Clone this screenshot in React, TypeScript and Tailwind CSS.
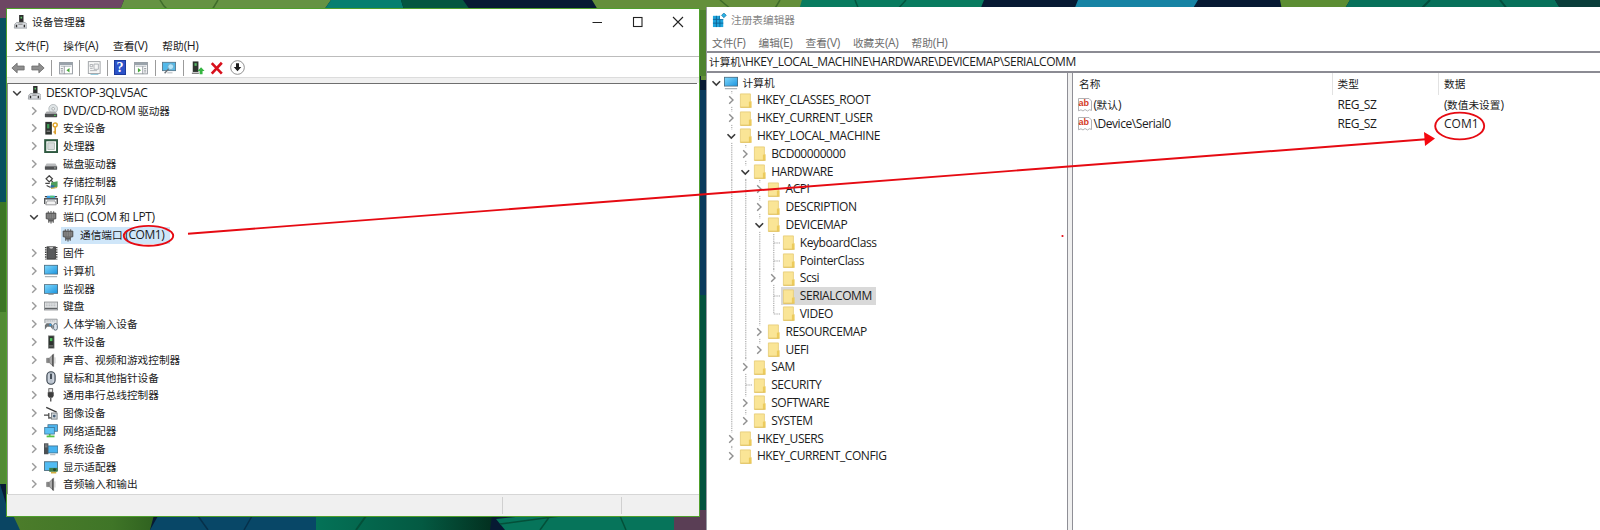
import React from "react";

/* ---------- text ---------- */

function Txt({ s, latin = "text-[12px] tracking-[-0.43px]" }: { s: string; latin?: string }) {
  const parts = s.split(/([\u3000-\u9fff]+)/).filter(Boolean);
  return (
    <span className="flex items-baseline whitespace-pre">
      {parts.map((p, i) =>
        /[\u3000-\u9fff]/.test(p) ? (
          <span key={i} className="font-['Noto_Sans_CJK_SC',sans-serif] text-[10.67px] leading-[16px]">
            {p}
          </span>
        ) : (
          <span key={i} className={"font-['Open_Sans','Noto_Sans_CJK_SC',sans-serif] leading-[16px] " + latin}>
            {p}
          </span>
        )
      )}
    </span>
  );
}

/* ---------- icons ---------- */

const Svg = ({ children, size = "size-[14px]" }: { children: React.ReactNode; size?: string }) => (
  <svg viewBox="0 0 16 16" className={"shrink-0 " + size}>
    {children}
  </svg>
);

const Monitor = ({ stand = true }: { stand?: boolean }) => (
  <Svg>
    <defs>
      <linearGradient id="scr" x1="0" y1="0" x2="1" y2="1">
        <stop offset="0" stopColor="#7fd6fb" />
        <stop offset="1" stopColor="#1e97e0" />
      </linearGradient>
    </defs>
    <rect x="0" y={stand ? 1 : 2.5} width="16" height="11" fill="#4d6b7d" />
    <rect x="0.9" y={stand ? 1.9 : 3.4} width="14.2" height="9.2" fill="url(#scr)" />
    {stand ? <path d="M1 14.5h14" stroke="#9aa4aa" strokeWidth="1.2" /> : <path d="M5 14.3h6" stroke="#8d979d" />}
  </Svg>
);

const Plug = () => (
  <Svg>
    <path d="M5 1.5v3M11 1.5v3M8 1v2" stroke="#777" strokeWidth="1.4" />
    <path d="M2.5 3.500h11V10h-2l-1 2.500h-5L4.500 10h-2z" fill="#6c6c6c" stroke="#4c4c4c" />
    <path d="M4.500 4.500v5M7 4.500v5M9.400 4.500v5M11.600 4.500v5" stroke="#a0a0a0" strokeWidth=".8" />
    <path d="M5.500 12.500v2M10.500 12.500v2M8 12.500v3" stroke="#444" strokeWidth="1.200" />
  </Svg>
);

const Speaker = () => (
  <Svg>
    <path d="M3 6h3v5H3z" fill="#8c8c8c" stroke="#666" strokeWidth=".6" />
    <path d="M6 6l5-5v14.5L6 11z" fill="#a9a9a9" stroke="#666" strokeWidth=".7" />
    <path d="M10 2v13" stroke="#555" strokeWidth="1.6" />
    <path d="M12.5 5v7" stroke="#bbb" />
  </Svg>
);

const icons: Record<string, () => React.ReactElement> = {
  root: () => (
    <Svg>
      <rect x="7" y="0" width="5" height="8.5" fill="#2d2d2d" />
      <rect x="8.6" y="2" width="1.8" height="2" fill="#5ecb6b" />
      <path d="M2 10.5l2-2h10l2 2v4.5H1.5z" fill="#d7dade" stroke="#8d9095" strokeWidth=".8" />
      <path d="M4 11v3M13 11v3" stroke="#2e2e2e" strokeWidth="1.6" />
      <path d="M6 10.5h5" stroke="#777" />
    </Svg>
  ),
  dvd: () => (
    <Svg>
      <circle cx="10.5" cy="5.5" r="5" fill="#dfe4e6" stroke="#a5abae" strokeWidth=".8" />
      <circle cx="10.5" cy="5.5" r="1.5" fill="#fff" stroke="#8d9497" strokeWidth=".8" />
      <path d="M3 8.5h10l2 2.5H1z" fill="#a7a9ab" />
      <rect x="1" y="11" width="14" height="4" rx=".5" fill="#4b4d4f" />
      <rect x="11.5" y="12.4" width="2" height="1.2" fill="#4fd15b" />
    </Svg>
  ),
  security: () => (
    <Svg>
      <rect x="1.5" y="1" width="7.5" height="14.5" fill="#2f3430" />
      <rect x="3.5" y="3.5" width="2.6" height="5" fill="#3e9c54" />
      <rect x="3" y="11" width="4" height="1.3" fill="#8c8c8c" />
      <circle cx="12.8" cy="4.5" r="2.3" fill="none" stroke="#e0a62c" strokeWidth="1.7" />
      <path d="M12.8 7v8M12.8 12.5h-2" stroke="#d89a22" strokeWidth="1.7" />
    </Svg>
  ),
  cpu: () => (
    <Svg>
      <rect x="1.4" y="1.4" width="13.6" height="13.6" fill="#fff" stroke="#2f5a41" strokeWidth="2.4" />
      <rect x="4.4" y="4.4" width="7.6" height="7.6" fill="#d8dcdc" stroke="#9fb0a6" strokeWidth=".8" />
    </Svg>
  ),
  disk: () => (
    <Svg>
      <path d="M3 7.5h10l2 3H1z" fill="#b9bbbd" />
      <rect x="1" y="10.5" width="14" height="4" rx=".5" fill="#4f5153" />
      <rect x="11.5" y="12" width="2" height="1" fill="#b5bdb7" />
    </Svg>
  ),
  storage: () => (
    <Svg>
      <path d="M6 .8l3.6 3.6L6 8 2.400 4.400z" fill="#fff" stroke="#444" strokeWidth="1.4" />
      <path d="M1.500 9.500h5M3 12l4 2M8 6l3 3" stroke="#444" strokeWidth="1.3" />
      <path d="M8 8.500l7.500-1.500v6.500L8 15z" fill="#4f9d5c" />
      <path d="M8 11.500l4 .5v3l-5-.5z" fill="#2c6ea5" />
      <path d="M8 15.300l7-1" stroke="#c9a94a" strokeWidth="1.2" />
    </Svg>
  ),
  printer: () => (
    <Svg>
      <path d="M3.500 3h9l1 4h-11z" fill="#3aa0e6" />
      <path d="M7 3h4l1 2H7z" fill="#58c46c" />
      <path d="M.8 12.500V6.500h14.400v6" fill="none" stroke="#56585a" strokeWidth="1.700" />
      <path d="M3.500 9h9l1.500 4.500H2z" fill="#f3f3f3" stroke="#77797b" strokeWidth=".8" />
      <path d="M1 4.200h2.500M12.500 4.200H15" stroke="#444" strokeWidth="1.300" />
    </Svg>
  ),
  plug: () => <Plug />,
  firmware: () => (
    <Svg>
      <rect x="3.500" y="1" width="9.500" height="14" fill="#58595b" stroke="#333" />
      <path d="M2 1v14.500M14.500 1v14.500" stroke="#444" strokeWidth="1.800" strokeDasharray="1.500 1.200" />
      <path d="M6 1.200a2.300 2 0 004.600 0" fill="#c7c7c7" />
    </Svg>
  ),
  computer: () => <Monitor />,
  monitor: () => <Monitor stand={false} />,
  keyboard: () => (
    <Svg>
      <rect x="0.500" y="3.500" width="15" height="9" fill="#e4e6e8" stroke="#888b8e" />
      <path d="M2 5.700h12M2 7.700h12" stroke="#aeb1b4" strokeWidth="1.100" strokeDasharray="1.300 .6" />
      <path d="M1 10.800h14" stroke="#5e6164" strokeWidth="1.600" />
    </Svg>
  ),
  hid: () => (
    <Svg>
      <path d="M1 7V2.500h14V8" fill="#dfe2e5" stroke="#8c9094" />
      <path d="M3 4.500h10" stroke="#9b9fa3" strokeDasharray="1.200 .8" />
      <path d="M1 14.500V9.500l2-2.500h5l2 2.500v5L7.500 11h-4z" fill="#6e7275" />
      <circle cx="7.300" cy="9" r="1.300" fill="#3d9ad8" />
      <rect x="11" y="7.500" width="4.200" height="7.500" rx="2" fill="#dce5ee" stroke="#4c5b69" />
    </Svg>
  ),
  software: () => (
    <Svg>
      <rect x="5" y="1" width="6.500" height="14" fill="#2e332f" stroke="#7d7f7e" strokeWidth=".8" />
      <rect x="6.800" y="3.500" width="2.800" height="3.500" fill="#4fc35d" />
      <path d="M6 12.500h4.500" stroke="#9a9a9a" />
    </Svg>
  ),
  speaker: () => <Speaker />,
  mouse: () => (
    <Svg>
      <rect x="3.300" y=".8" width="9.400" height="14.400" rx="4.600" fill="#b9c2cd" stroke="#3f4953" strokeWidth="1.300" />
      <path d="M8 3v6" stroke="#27303a" strokeWidth="1.800" />
      <path d="M5.600 3.500v9M10.500 3.500v9" stroke="#e5eaf0" strokeWidth=".8" />
    </Svg>
  ),
  usb: () => (
    <Svg>
      <rect x="5.500" y=".8" width="4.400" height="4" fill="#f0f0f0" stroke="#555" />
      <path d="M4.300 4.800h6.800V9l-1.500 2H5.800L4.300 9z" fill="#3d3d3d" />
      <path d="M7.700 11v4.500" stroke="#555" strokeWidth="1.600" />
    </Svg>
  ),
  camera: () => (
    <Svg>
      <path d="M2.500 1.500L14.500 7" stroke="#3c3c3c" strokeWidth="1.500" />
      <path d="M0 10.500h6M5.500 8v6.500M5.500 13.500h3" stroke="#4a4a4a" strokeWidth="1.400" />
      <rect x="8.500" y="8" width="6.500" height="7" fill="#cfd4d8" stroke="#6f757a" strokeWidth=".9" />
      <circle cx="11.700" cy="11.500" r="1.600" fill="#48617a" />
    </Svg>
  ),
  network: () => (
    <Svg>
      <rect x="4.500" y=".8" width="11" height="7.500" fill="#4db4ee" stroke="#46708a" strokeWidth=".9" />
      <rect x=".8" y="4" width="11" height="7.500" fill="#5cc1f5" stroke="#3a7396" strokeWidth=".9" />
      <path d="M6.500 11.500v2" stroke="#4aa83d" strokeWidth="2" />
      <path d="M3 14.200h9" stroke="#55c043" strokeWidth="2" />
    </Svg>
  ),
  system: () => (
    <Svg>
      <rect x="0" y="1.500" width="5" height="12.500" fill="#4c5053" />
      <path d="M1 3.500h3M1 5.500h3" stroke="#a3a7aa" strokeWidth=".9" />
      <rect x="4.800" y="4.500" width="11" height="8" fill="#46b3f0" stroke="#3a6c89" strokeWidth=".9" />
      <path d="M7 14.500h6" stroke="#9aa4aa" />
    </Svg>
  ),
  display: () => (
    <Svg>
      <rect x=".5" y="2" width="15" height="10" fill="#52bcf3" stroke="#4d6b7d" />
      <path d="M6 9h9.500v4.500H6z" fill="#3f7f49" />
      <circle cx="12" cy="11.200" r="1.700" fill="#27462c" />
      <path d="M8 14.500h6" stroke="#d3ae3e" strokeWidth="1.800" />
    </Svg>
  ),
};

const Chevron = ({ open }: { open: boolean }) => (
  <svg viewBox="0 0 10 10" className="size-[10px] shrink-0">
    {open ? (
      <path d="M1.200 3.200L5 7l3.800-3.800" fill="none" stroke="#3a3a3a" strokeWidth="1.500" />
    ) : (
      <path d="M3.200 1.200L7 5 3.200 8.800" fill="none" stroke="#9a9a9a" strokeWidth="1.400" />
    )}
  </svg>
);

const Folder = () => (
  <svg viewBox="0 0 14 15" className="h-[15px] w-[14px] shrink-0">
    <path d="M2.400.9h10v13.400h-10z" fill="#fae596" stroke="#e6cb73" strokeWidth=".8" />
    <path d="M10.900 8.800l2.700-.6v6.100h-2.700z" fill="#eccb5c" />
    <path d="M2.400 14.300h11.200" stroke="#dfbf58" strokeWidth=".8" />
  </svg>
);

const Ab = () => (
  <svg viewBox="0 0 14 14" className="size-[14px]">
    <path d="M.5.5h10.500l2.500 2.500v9.500l-2-.8-2 1.300-2.500-1.500-2 1.500-2-1.200-2.500 1z" fill="#fff" stroke="#a9a9ad" strokeWidth=".9" />
  </svg>
);

/* ---------- device manager ---------- */

type Dev = { t: string; icon: string; lvl: 0 | 1 | 2; open?: boolean };

const devices: Dev[] = [
  { t: "DESKTOP-3QLV5AC", icon: "root", lvl: 0, open: true },
  { t: "DVD/CD-ROM 驱动器", icon: "dvd", lvl: 1 },
  { t: "安全设备", icon: "security", lvl: 1 },
  { t: "处理器", icon: "cpu", lvl: 1 },
  { t: "磁盘驱动器", icon: "disk", lvl: 1 },
  { t: "存储控制器", icon: "storage", lvl: 1 },
  { t: "打印队列", icon: "printer", lvl: 1 },
  { t: "端口 (COM 和 LPT)", icon: "plug", lvl: 1, open: true },
  { t: "通信端口 (COM1)", icon: "plug", lvl: 2 },
  { t: "固件", icon: "firmware", lvl: 1 },
  { t: "计算机", icon: "computer", lvl: 1 },
  { t: "监视器", icon: "monitor", lvl: 1 },
  { t: "键盘", icon: "keyboard", lvl: 1 },
  { t: "人体学输入设备", icon: "hid", lvl: 1 },
  { t: "软件设备", icon: "software", lvl: 1 },
  { t: "声音、视频和游戏控制器", icon: "speaker", lvl: 1 },
  { t: "鼠标和其他指针设备", icon: "mouse", lvl: 1 },
  { t: "通用串行总线控制器", icon: "usb", lvl: 1 },
  { t: "图像设备", icon: "camera", lvl: 1 },
  { t: "网络适配器", icon: "network", lvl: 1 },
  { t: "系统设备", icon: "system", lvl: 1 },
  { t: "显示适配器", icon: "display", lvl: 1 },
  { t: "音频输入和输出", icon: "speaker", lvl: 1 },
];

const devPad = ["pl-[4px]", "pl-[21px]", "pl-[38px]"];

function DeviceRow({ d }: { d: Dev }) {
  const Icon = icons[d.icon];
  return (
    <div className={"flex h-[17.8px] items-center " + devPad[d.lvl]}>
      <div className="w-[15px] shrink-0">{d.lvl < 2 && <Chevron open={!!d.open} />}</div>
      <div className={"flex h-[17px] items-center gap-[5px] " + (d.lvl === 2 ? "bg-[#cfe6f9] pr-[6px]" : "")}>
        <Icon />
        <Txt s={d.t} />
      </div>
    </div>
  );
}

const Sep = () => <div className="h-[16px] w-px shrink-0 bg-[#9b9b9b]" />;

const PaneWindow = ({ flip }: { flip?: boolean }) => (
  <Svg>
    <rect x=".7" y="1.700" width="14.600" height="13" fill="#fff" stroke="#8a9097" />
    <rect x=".7" y="1.700" width="14.600" height="3" fill="#9aa3ab" />
    <path d="M2 6h12" stroke="#b9c0c6" strokeWidth="1.300" />
    {flip ? (
      <>
        <path d="M10 6v9" stroke="#8a9097" />
        <path d="M4.500 8v5l3.500-2.500z" fill="#49a83c" />
        <path d="M11.500 8.500h2.500M11.500 10.500h2.500M11.500 12.500h2.500" stroke="#8a9097" />
      </>
    ) : (
      <>
        <path d="M6 6v9" stroke="#8a9097" />
        <path d="M12 8v5L8.500 10.500z" fill="#49a83c" />
        <path d="M2 8.500h2.500M2 10.500h2.500M2 12.500h2.500" stroke="#8a9097" />
      </>
    )}
  </Svg>
);

function Toolbar() {
  const arrow = "M1 8l6-5.500v3.300h8v4.400H7v3.300z";
  return (
    <div className="flex h-[20px] shrink-0 items-center pt-[1px] pl-[4px]">
      <Svg>
        <path d={arrow} fill="#8f8f8f" stroke="#6f6f6f" />
      </Svg>
      <div className="ml-[6px] flex scale-x-[-1]">
        <Svg>
          <path d={arrow} fill="#8f8f8f" stroke="#6f6f6f" />
        </Svg>
      </div>
      <div className="ml-[6px] flex items-center gap-[6.500px]">
        <Sep />
        <PaneWindow />
        <Sep />
        <Svg>
          <rect x="1.500" y=".7" width="13.500" height="13.600" fill="#f6f6f6" stroke="#9a9ea2" />
          <path d="M3.500 4h3v2.500h-3zM3.500 8.500h3M3.500 11h8M8 3.500h5v6H8z" fill="none" stroke="#a9adb1" />
          <path d="M4 15.500h9" stroke="#7fc0d6" />
        </Svg>
        <Sep />
      </div>
      <div className="ml-[6px] flex h-[15px] w-[12px] items-center justify-center border border-[#1c3a9c] bg-[#2c52c8]">
        <span className="font-['Liberation_Serif',serif] text-[14px] leading-[14px] font-bold text-white">?</span>
      </div>
      <div className="ml-[8px] flex items-center gap-[6.500px]">
        <PaneWindow flip />
        <Sep />
        <Svg>
          <rect x=".5" y="1.500" width="15" height="9.500" fill="#52b9ea" stroke="#56788c" />
          <circle cx="10" cy="6.500" r="3.300" fill="#b5e6fb" stroke="#6ea9c5" />
          <path d="M7.500 9l-4.500 5" stroke="#6a7075" strokeWidth="1.600" />
          <path d="M6 13.500h6" stroke="#a8aeb2" />
        </Svg>
        <Sep />
      </div>
      <div className="ml-[7.500px] flex items-center">
        <Svg>
          <rect x="2" y=".5" width="6.500" height="12" fill="#2d332e" />
          <rect x="4" y="2.500" width="2.500" height="3" fill="#56b865" />
          <path d="M1 14h8" stroke="#777" strokeWidth="1.500" />
          <path d="M11.500 7l4 4.300h-2.300V15H9.800v-3.700H7.500z" fill="#35b541" />
        </Svg>
        <div className="ml-[5px] flex">
          <Svg>
            <path d="M2 2.500l11.500 12M13.500 2L2 14.500" stroke="#d8101c" strokeWidth="3" />
          </Svg>
        </div>
        <div className="ml-[6px] flex">
          <Svg size="size-[15px]">
            <circle cx="8" cy="8" r="7.300" fill="#fff" stroke="#8b8b8b" strokeWidth="1" />
            <path d="M6.400 3.500h3.200V7.500H12L8 12 4 7.500h2.400z" fill="#1d1d1d" />
          </Svg>
        </div>
      </div>
    </div>
  );
}

function DeviceManager() {
  return (
    <div className="mt-[8px] ml-[6px] flex h-[509px] w-[694px] shrink-0 flex-col border border-[#4f9f2c] bg-white text-[#1c1c1c]">
      <div className="flex h-[25px] shrink-0 items-center pl-[6px]">
        {icons.root()}
        <div className="ml-[5px]">
          <Txt s="设备管理器" />
        </div>
        <svg viewBox="0 0 100 14" className="mr-[10px] ml-auto h-[14px] w-[100px]" fill="none" stroke="#222" strokeWidth="1.100">
          <path d="M3.500 7.500h9.500M84 2l10 10M94 2L84 12" />
          <rect x="44.500" y="2.500" width="8.500" height="9" />
        </svg>
      </div>
      <div className="flex h-[22px] shrink-0 items-center gap-[15px] pt-px pl-[8px]">
        {["文件(F)", "操作(A)", "查看(V)", "帮助(H)"].map((m) => (
          <Txt key={m} s={m} />
        ))}
      </div>
      <div className="h-px shrink-0 bg-[#bcbcbc]" />
      <Toolbar />
      <div className="h-[6px] shrink-0 border-t border-[#dcdcdc] bg-[#f0f0f0]" />
      <div className="mr-[2px] flex h-[411px] shrink-0 flex-col border-t border-l border-t-[#6e6e6e] border-l-[#8e8e8e]">
        {devices.map((d) => (
          <DeviceRow key={d.t} d={d} />
        ))}
      </div>
      <div className="flex min-h-0 flex-1 border-t border-[#d6d6d6] bg-[#f0f0f0] py-[2px]">
        <div className="w-[496px] border-r border-[#d0d0d0]" />
        <div className="w-[119px] border-r border-[#d0d0d0]" />
      </div>
    </div>
  );
}

/* ---------- registry editor ---------- */

type Key = { t: string; lvl: number; state: "open" | "closed" | "leaf"; last?: boolean; sel?: boolean };

const keys: Key[] = [
  { t: "计算机", lvl: 0, state: "open" },
  { t: "HKEY_CLASSES_ROOT", lvl: 1, state: "closed" },
  { t: "HKEY_CURRENT_USER", lvl: 1, state: "closed" },
  { t: "HKEY_LOCAL_MACHINE", lvl: 1, state: "open" },
  { t: "BCD00000000", lvl: 2, state: "closed" },
  { t: "HARDWARE", lvl: 2, state: "open" },
  { t: "ACPI", lvl: 3, state: "closed" },
  { t: "DESCRIPTION", lvl: 3, state: "closed" },
  { t: "DEVICEMAP", lvl: 3, state: "open" },
  { t: "KeyboardClass", lvl: 4, state: "leaf" },
  { t: "PointerClass", lvl: 4, state: "leaf" },
  { t: "Scsi", lvl: 4, state: "closed" },
  { t: "SERIALCOMM", lvl: 4, state: "leaf", sel: true },
  { t: "VIDEO", lvl: 4, state: "leaf", last: true },
  { t: "RESOURCEMAP", lvl: 3, state: "closed" },
  { t: "UEFI", lvl: 3, state: "closed", last: true },
  { t: "SAM", lvl: 2, state: "closed" },
  { t: "SECURITY", lvl: 2, state: "leaf" },
  { t: "SOFTWARE", lvl: 2, state: "closed" },
  { t: "SYSTEM", lvl: 2, state: "closed", last: true },
  { t: "HKEY_USERS", lvl: 1, state: "closed" },
  { t: "HKEY_CURRENT_CONFIG", lvl: 1, state: "closed", last: true },
];

function KeyRow({ k }: { k: Key }) {
  const guides = Array.from({ length: k.lvl }, (_, i) => i);
  return (
    <div className="flex h-[17.8px] items-center pl-[2.300px]">
      {guides.map((g) => (
        <svg key={g} viewBox="0 0 14.3 17.8" className="h-[17.8px] w-[14.3px] shrink-0">
          {g > 0 && <path d="M7.800 0V17.800" stroke="#9c9c9c" strokeWidth="1" strokeDasharray="1 .78" />}
        </svg>
      ))}
      <svg viewBox="0 0 14.3 17.8" className="h-[17.8px] w-[14.3px] shrink-0" fill="none">
        {k.lvl > 0 && (
          <path d={k.last ? "M7.800 0V9" : "M7.800 0V17.800"} stroke="#9c9c9c" strokeDasharray="1 .78" />
        )}
        {k.state === "leaf" && <path d="M7.800 9H14" stroke="#9c9c9c" strokeDasharray="1 .78" />}
        {k.state !== "leaf" && <path d="M1 2.500h12v13H1z" fill="#fff" />}
        {k.state === "closed" && <path d="M5.200 5.200L9 9l-3.800 3.800" stroke="#8f8f8f" strokeWidth="1.400" />}
        {k.state === "open" && <path d="M3.500 7.200l3.800 3.800 3.800-3.800" stroke="#3a3a3a" strokeWidth="1.600" />}
      </svg>
      <div className={"flex h-[17.8px] items-center gap-[5px] pr-1 " + (k.sel ? "bg-[#d9d9d9]" : "")}>
        {k.lvl === 0 ? <Monitor /> : <Folder />}
        <Txt s={k.t} />
      </div>
    </div>
  );
}

const values = [
  { n: "(默认)", t: "REG_SZ", d: "(数值未设置)", tight: true },
  { n: "\\Device\\Serial0", t: "REG_SZ", d: "COM1", tight: false },
];

function RegistryEditor() {
  return (
    <div className="mt-[7px] ml-[6px] flex h-[523px] min-w-0 flex-1 flex-col border-l border-[#9a9aa4] bg-white text-[#1c1c1c]">
      <div className="flex h-[26px] shrink-0 items-center pl-[5px] text-[#858585]">
        <Svg size="size-[15px]">
          <path d="M1 3h11v12H1z" fill="#1fa4dc" />
          <path d="M1 6.800h11M1 10.800h11M4.700 3v12M8.400 3v12" stroke="#0c5f92" strokeWidth=".9" />
          <path d="M8.500 2.500h4v4h-4z" fill="#fff" />
          <path d="M12.600 0l2.600 2.400-2.400 2.600-2.600-2.400z" fill="#2bb3e6" stroke="#0c6c9f" strokeWidth=".7" />
        </Svg>
        <div className="ml-[4px]">
          <Txt s="注册表编辑器" />
        </div>
      </div>
      <div className="flex h-[18px] shrink-0 items-center gap-[13.200px] pt-px pl-[5px] text-[#6d6d6d]">
        {["文件(F)", "编辑(E)", "查看(V)", "收藏夹(A)", "帮助(H)"].map((m) => (
          <Txt key={m} s={m} />
        ))}
      </div>
      <div className="flex h-[22px] shrink-0 items-center border-y-2 border-[#8b8b93] pl-[2px]">
        <Txt s="计算机\HKEY_LOCAL_MACHINE\HARDWARE\DEVICEMAP\SERIALCOMM" />
      </div>
      <div className="flex min-h-0 flex-1">
        <div className="w-[360px] shrink-0 pt-[0.700px]">
          {keys.map((k) => (
            <KeyRow key={k.t} k={k} />
          ))}
        </div>
        <div className="w-[6px] shrink-0 border-x border-[#8f8f96] bg-[#f0f0f0]" />
        <div className="flex-1">
          <div className="mb-[0.800px] flex h-[22px] items-center">
            <div className="flex h-full w-[259.500px] items-center border-r border-[#e2e2e2] pl-[6px]">
              <Txt s="名称" />
            </div>
            <div className="flex h-full w-[106.500px] items-center border-r border-[#e2e2e2] pl-[5px]">
              <Txt s="类型" />
            </div>
            <div className="flex h-full items-center pl-[5px]">
              <Txt s="数据" />
            </div>
          </div>
          {values.map((v) => (
            <div key={v.n} className="flex h-[18.600px] items-center">
              <div className="flex w-[259.500px] items-center gap-[2px] pl-[4.500px]">
                <div className="relative size-[14px] shrink-0">
                  <Ab />
                  <span className="absolute top-0 left-[1px] font-['Liberation_Sans',sans-serif] text-[9px] leading-[11px] font-bold text-[#d43a26]">
                    ab
                  </span>
                </div>
                <Txt s={v.n} />
              </div>
              <div className="w-[106.500px] pl-[5px]">
                <Txt s={v.t} />
              </div>
              <div className="pl-[5px]">
                <Txt s={v.d} latin={v.tight ? undefined : "text-[12px]"} />
              </div>
            </div>
          ))}
        </div>
      </div>
    </div>
  );
}

/* ---------- desktop ---------- */

function Wallpaper() {
  return (
    <svg viewBox="0 0 1600 530" className="absolute inset-0 size-full">
      <defs>
        <linearGradient id="dusk">
          <stop offset="0" stopColor="#4d7d2b" />
          <stop offset=".7" stopColor="#3f7527" />
          <stop offset="1" stopColor="#2e601f" />
        </linearGradient>
        <linearGradient id="pine">
          <stop offset="0" stopColor="#047257" />
          <stop offset=".6" stopColor="#045a42" />
          <stop offset="1" stopColor="#02301f" />
        </linearGradient>
      </defs>
      <rect width="1600" height="530" fill="#071a33" />
      <path d="M0 0h124l-4 10H0z" fill="#6d4763" />
      <path d="M124 0h207l-7 10H120z" fill="#659343" />
      <path d="M160 0q3 6 8 10M218 0l-6 10" stroke="#3f6d2b" strokeWidth="1.500" fill="none" />
      <path d="M331 0h70l3 10h-80z" fill="#067f70" />
      <path d="M401 0h62l7 10h-66z" fill="#045640" />
      <path d="M592 0h210l-3 80h-98V10H598z" fill="#648f3b" />
      <path d="M720 0l12 10M780 0l-6 10" stroke="#3f6d2b" strokeWidth="1.500" />
      <path d="M802 0h182l-4 10H799z" fill="#087b5f" />
      <path d="M906 0l-9 10M855 0l4 10" stroke="#04553f" strokeWidth="1.500" />
      <path d="M1078 0h120l-6 10H1074z" fill="#1683a4" />
      <path d="M1280 0h70l-6 10h-62z" fill="#5c8d33" />
      <path d="M1350 0h205l6 10h-217z" fill="#07705a" />
      <path d="M1430 0l-10 10M1500 0l8 10" stroke="#044d3d" strokeWidth="2" />
      <path d="M1555 0h45v10h-39z" fill="#0a3d3a" />
      <path d="M0 0h6v18H0z" fill="#6d4763" />
      <path d="M0 18h6v184H0z" fill="#06505f" />
      <path d="M0 202h6v110H0z" fill="#3c7526" />
      <path d="M0 312h6v172H0z" fill="#528b35" />
      <path d="M0 484l14 46H0z" fill="#0a4563" />
      <path d="M0 516h20v14H0z" fill="#0a4563" />
      <path d="M6 500h152l-8 30H20z" fill="url(#dusk)" />
      <path d="M158 516h158v14H150z" fill="#084767" />
      <path d="M198 516l10 14M252 516l-8 14" stroke="#06304a" strokeWidth="1.500" />
      <path d="M316 516h176l-2 14H316z" fill="url(#pine)" />
      <path d="M366 516l-10 14" stroke="#045039" strokeWidth="2" />
      <path d="M496 519l30-3h150v14H505z" fill="#06745a" />
      <path d="M550 516l-10 14M620 516l6 14M500 524l60-8" stroke="#045039" strokeWidth="1.500" />
      <path d="M700 10h6v66h-6z" fill="#4e8230" />
      <path d="M700 90h6v205h-6z" fill="#0a3a5c" />
      <path d="M700 295h6v215h-6z" fill="#03523e" />
      <path d="M674 517h26v-7h6v20h-32z" fill="#5a3e55" />
    </svg>
  );
}

function Annotations() {
  return (
    <svg viewBox="0 0 1600 530" className="pointer-events-none absolute inset-0 size-full" fill="none" stroke="#e60a12">
      <path d="M188 233.700L1426 139.300" strokeWidth="1.900" />
      <path d="M1424 132l11 6.600-10 7.400z" fill="#f5080f" stroke="none" />
      <ellipse cx="148.500" cy="235.800" rx="24.700" ry="9.900" strokeWidth="1.900" />
      <ellipse cx="1459.700" cy="126" rx="24.500" ry="13.400" strokeWidth="1.900" />
      <circle cx="1062.500" cy="236" r="1.100" fill="#e60a12" stroke="none" />
    </svg>
  );
}

export default function App() {
  return (
    <div className="relative flex h-[530px] w-[1600px] overflow-hidden">
      <Wallpaper />
      <div className="relative flex w-full">
        <DeviceManager />
        <RegistryEditor />
        <Annotations />
      </div>
    </div>
  );
}
